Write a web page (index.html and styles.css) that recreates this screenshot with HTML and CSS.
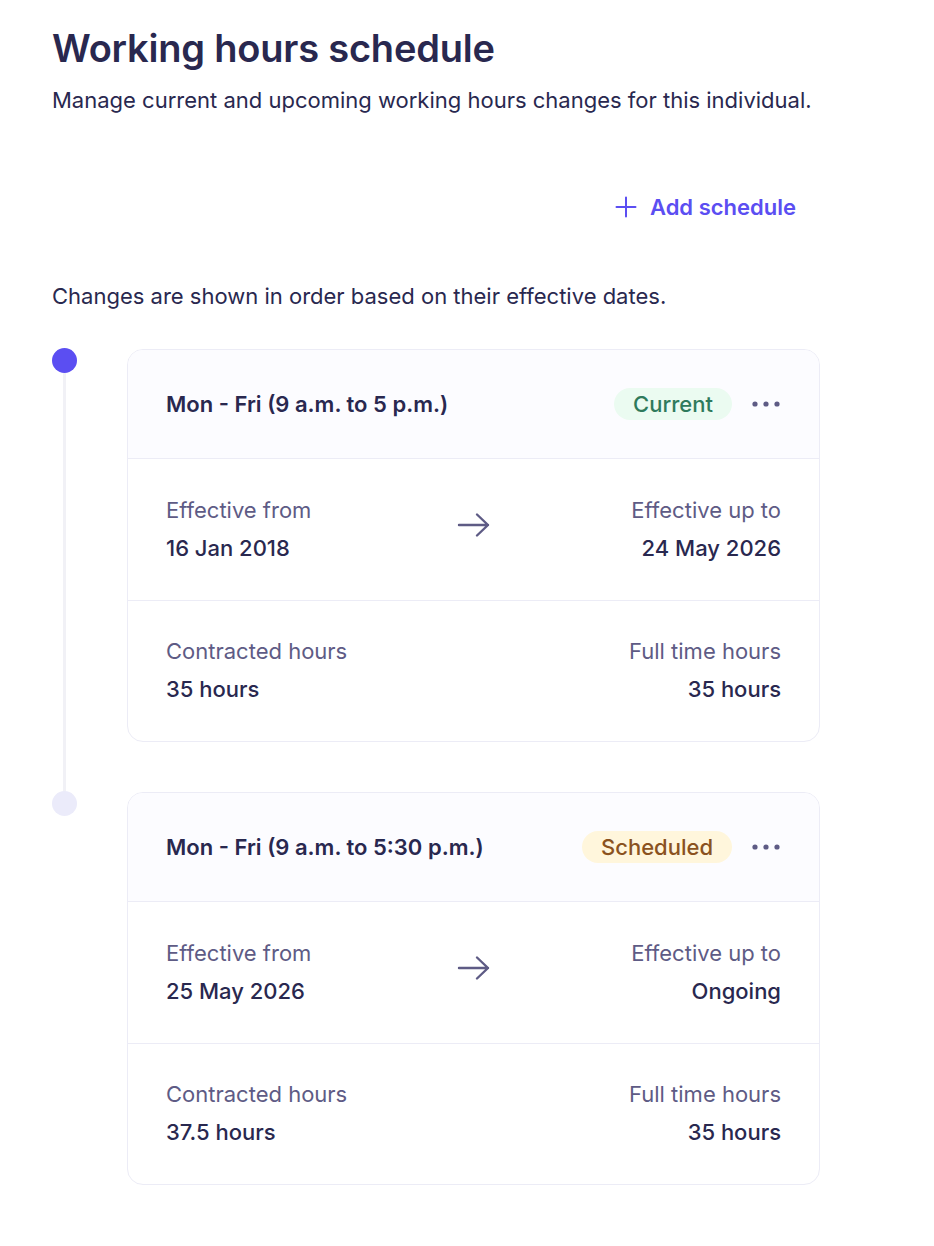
FILE: index.html
```html
<!DOCTYPE html>
<html lang="en">
<head>
<meta charset="utf-8">
<title>Working hours schedule</title>
<link rel="stylesheet" href="styles.css">
</head>
<body>
<main class="page">
  <h1 class="title">Working hours schedule</h1>
  <p class="subtitle">Manage current and upcoming working hours changes for this individual.</p>

  <div class="actions">
    <button class="add-btn" type="button">
      <svg class="plus" width="22" height="22" viewBox="0 0 22 22" aria-hidden="true"><path d="M11 1.5v19M1.5 11h19" stroke="currentColor" stroke-width="2" stroke-linecap="round" fill="none"/></svg>
      <span>Add schedule</span>
    </button>
  </div>

  <p class="note">Changes are shown in order based on their effective dates.</p>

  <div class="timeline">
    <div class="entry">
      <div class="rail">
        <span class="dot dot-active"></span>
        <span class="line"></span>
      </div>
      <section class="card">
        <header class="card-head">
          <h2 class="card-title">Mon - Fri (9 a.m. to 5 p.m.)</h2>
          <div class="head-right">
            <span class="badge badge-current">Current</span>
            <button class="more" type="button" aria-label="More">
              <svg width="30" height="8" viewBox="0 0 30 8"><circle cx="4" cy="4" r="2.6" fill="currentColor"/><circle cx="15" cy="4" r="2.6" fill="currentColor"/><circle cx="26" cy="4" r="2.6" fill="currentColor"/></svg>
            </button>
          </div>
        </header>
        <div class="row row-dates">
          <div class="field">
            <div class="label">Effective from</div>
            <div class="value">16 Jan 2018</div>
          </div>
          <svg class="arrow" width="34" height="26" viewBox="0 0 34 26" aria-hidden="true"><path d="M2 13h29M20 2.5l11 10.5-11 10.5" stroke="currentColor" stroke-width="2.4" stroke-linecap="round" stroke-linejoin="round" fill="none"/></svg>
          <div class="field field-right">
            <div class="label">Effective up to</div>
            <div class="value">24 May 2026</div>
          </div>
        </div>
        <div class="row">
          <div class="field">
            <div class="label">Contracted hours</div>
            <div class="value">35 hours</div>
          </div>
          <div class="field field-right">
            <div class="label">Full time hours</div>
            <div class="value">35 hours</div>
          </div>
        </div>
      </section>
    </div>

    <div class="entry">
      <div class="rail">
        <span class="dot dot-future"></span>
      </div>
      <section class="card">
        <header class="card-head">
          <h2 class="card-title">Mon - Fri (9 a.m. to 5:30 p.m.)</h2>
          <div class="head-right">
            <span class="badge badge-scheduled">Scheduled</span>
            <button class="more" type="button" aria-label="More">
              <svg width="30" height="8" viewBox="0 0 30 8"><circle cx="4" cy="4" r="2.6" fill="currentColor"/><circle cx="15" cy="4" r="2.6" fill="currentColor"/><circle cx="26" cy="4" r="2.6" fill="currentColor"/></svg>
            </button>
          </div>
        </header>
        <div class="row row-dates">
          <div class="field">
            <div class="label">Effective from</div>
            <div class="value">25 May 2026</div>
          </div>
          <svg class="arrow" width="34" height="26" viewBox="0 0 34 26" aria-hidden="true"><path d="M2 13h29M20 2.5l11 10.5-11 10.5" stroke="currentColor" stroke-width="2.4" stroke-linecap="round" stroke-linejoin="round" fill="none"/></svg>
          <div class="field field-right">
            <div class="label">Effective up to</div>
            <div class="value">Ongoing</div>
          </div>
        </div>
        <div class="row">
          <div class="field">
            <div class="label">Contracted hours</div>
            <div class="value">37.5 hours</div>
          </div>
          <div class="field field-right">
            <div class="label">Full time hours</div>
            <div class="value">35 hours</div>
          </div>
        </div>
      </section>
    </div>
  </div>
</main>
</body>
</html>
```

FILE: styles.css
```css
* { box-sizing: border-box; }

html, body {
  margin: 0;
  padding: 0;
  background: #ffffff;
}

body {
  font-family: Inter, "Noto Sans", "Liberation Sans", sans-serif;
  color: #29284f;
}

.page {
  width: 768px;
  padding: 26px 0 40px 52px;
  box-sizing: content-box;
}

.title {
  margin: 0;
  font-size: 38px;
  line-height: 44px;
  font-weight: 600;
  letter-spacing: -0.2px;
  color: #29284f;
}

.subtitle {
  margin: 15px 0 0;
  font-size: 22px;
  line-height: 30px;
  color: #29284f;
}

.actions {
  display: flex;
  justify-content: flex-end;
  margin-top: 70px;
}

.add-btn {
  display: inline-flex;
  align-items: center;
  gap: 13px;
  border: 0;
  background: transparent;
  padding: 8px 24px;
  font-family: inherit;
  font-size: 22px;
  line-height: 28px;
  font-weight: 600;
  color: #5b4ef2;
  cursor: pointer;
}

.plus { display: block; }

.note {
  margin: 52px 0 0;
  font-size: 22px;
  line-height: 30px;
  color: #29284f;
}

.timeline {
  margin-top: 38px;
  display: flex;
  flex-direction: column;
  gap: 50px;
}

.entry {
  display: flex;
  gap: 50px;
}

.rail {
  width: 25px;
  flex: none;
  display: flex;
  flex-direction: column;
  align-items: center;
}

.dot {
  width: 25px;
  height: 25px;
  border-radius: 50%;
  flex: none;
  margin-top: -1px;
}

.dot-active { background: #5b4ef2; }
.dot-future { background: #ebebfa; }

.line {
  width: 3px;
  flex: 1;
  background: #f1f1f6;
  margin-bottom: -50px;
}

.card {
  flex: 1;
  border: 1px solid #ececf6;
  border-radius: 16px;
  overflow: hidden;
  background: #ffffff;
}

.card-head {
  display: flex;
  align-items: center;
  justify-content: space-between;
  height: 109px;
  padding: 0 38px;
  background: #fcfcff;
  border-bottom: 1px solid #ececf6;
}

.card-title {
  margin: 0;
  font-size: 22px;
  line-height: 28px;
  font-weight: 600;
  color: #29284f;
}

.head-right {
  display: flex;
  align-items: center;
  gap: 19px;
}

.badge {
  display: inline-flex;
  align-items: center;
  height: 32px;
  padding: 0 19px;
  border-radius: 16px;
  font-size: 22px;
  font-weight: 500;
}

.badge-current {
  background: #ebfbf1;
  color: #2f7a5c;
}

.badge-scheduled {
  background: #fff6dc;
  color: #8a5220;
}

.more {
  border: 0;
  background: transparent;
  padding: 0;
  color: #5e5b85;
  display: flex;
  cursor: pointer;
}

.more svg { display: block; }

.row {
  display: flex;
  align-items: center;
  justify-content: space-between;
  height: 141px;
  padding: 0 38px 2px;
}

.row-dates {
  display: grid;
  grid-template-columns: 1fr auto 1fr;
}

.row + .row { border-top: 1px solid #ececf6; }

.field {
  display: flex;
  flex-direction: column;
  gap: 10px;
}

.field-right { text-align: right; }

.label {
  font-size: 22px;
  line-height: 28px;
  color: #5e5b85;
}

.value {
  font-size: 22px;
  line-height: 28px;
  font-weight: 500;
  color: #29284f;
}

.arrow {
  color: #5e5b85;
  display: block;
  margin-top: -8px;
}
```
